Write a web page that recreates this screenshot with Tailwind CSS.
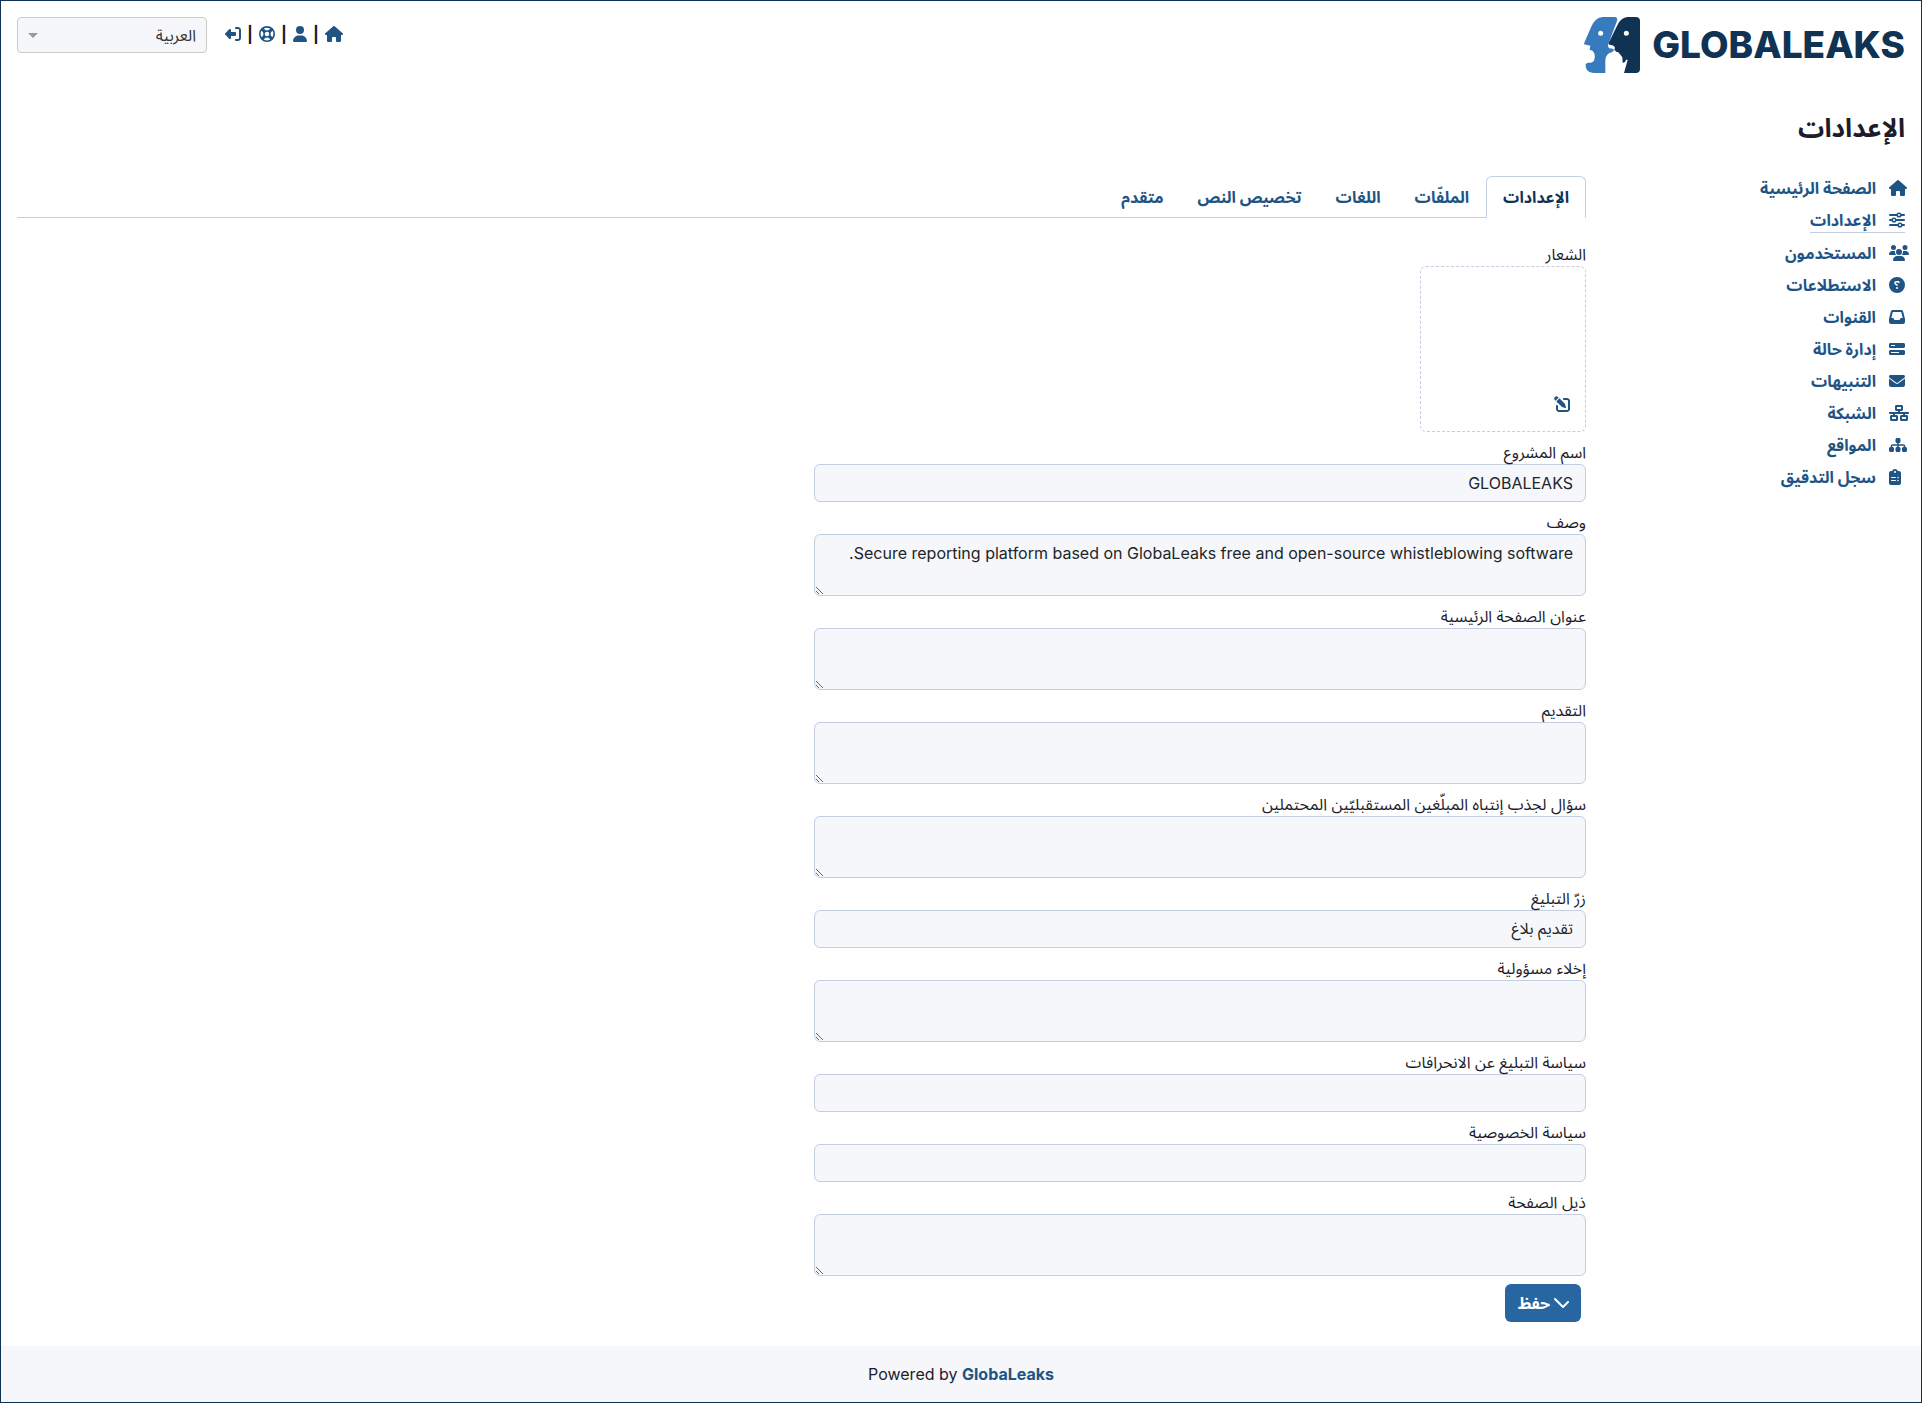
<!DOCTYPE html>
<html lang="ar" dir="rtl">
<head>
<meta charset="utf-8">
<meta name="viewport" content="width=device-width, initial-scale=1">
<title>GLOBALEAKS - الإعدادات</title>
<script src="https://cdn.jsdelivr.net/npm/@tailwindcss/browser@4"></script>
</head>
<body class="flex min-h-screen flex-col border border-[#103253] bg-white font-['Inter','Noto_Sans_Arabic','Noto_Sans',sans-serif] text-base leading-6 text-[#1c1c2b]">

<svg class="hidden" aria-hidden="true">
  <symbol id="house" viewBox="0 0 576 512"><path d="M575.8 255.5c0 18-15 32.1-32 32.1h-32l.7 160.2c0 2.7-.2 5.4-.5 8.1V472c0 22.1-17.9 40-40 40H392c-22.1 0-40-17.900-40-40V384c0-17.700-14.300-32-32-32H256c-17.700 0-32 14.300-32 32v88c0 22.100-17.900 40-40 40H104c-22.100 0-40-17.900-40-40V287.600H32c-18 0-32-14-32-32.100c0-9 3-17 10-24L266.400 8c7-7 15-8 22-8s15 2 21 7L564.800 231.500c8 7 12 15 11 24z"/></symbol>
  <symbol id="user" viewBox="0 0 448 512"><path d="M224 256A128 128 0 1 0 224 0a128 128 0 1 0 0 256zm-45.700 48C79.800 304 0 383.800 0 482.300C0 498.700 13.300 512 29.700 512H418.300c16.400 0 29.700-13.300 29.700-29.700C448 383.800 368.200 304 269.700 304H178.300z"/></symbol>
  <symbol id="ring" viewBox="0 0 512 512"><g fill="none" stroke="currentColor"><circle cx="256" cy="256" r="230" stroke-width="52"/><circle cx="256" cy="256" r="96" stroke-width="48"/><path stroke-width="100" d="M90 90l100 100M422 90L322 190M90 422l100-100M422 422L322 322"/></g></symbol>
  <symbol id="exit" viewBox="0 0 512 512"><path transform="matrix(-1 0 0 1 512 0)" d="M377.900 105.900L500.700 228.700c7.200 7.200 11.300 17.100 11.300 27.300s-4.100 20.100-11.300 27.300L377.900 406.100c-6.400 6.400-15 9.900-24 9.900c-18.700 0-33.900-15.200-33.900-33.900v-62.100H192c-17.700 0-32-14.300-32-32v-64c0-17.700 14.300-32 32-32h128v-62.100c0-18.700 15.200-33.900 33.900-33.900c9 0 17.600 3.600 24 9.900zM160 96H96c-17.700 0-32 14.300-32 32v256c0 17.700 14.300 32 32 32h64c17.700 0 32 14.300 32 32s-14.300 32-32 32H96c-53 0-96-43-96-96V128C0 75 43 32 96 32h64c17.700 0 32 14.300 32 32s-14.300 32-32 32z"/></symbol>
  <symbol id="sliders" viewBox="0 0 512 512"><g fill="none" stroke="currentColor" stroke-width="60" stroke-linecap="round"><path d="M30 96h220M390 96h92M30 256h60M230 256h252M30 416h250M420 416h62"/><circle cx="320" cy="96" r="58" stroke-width="50"/><circle cx="160" cy="256" r="58" stroke-width="50"/><circle cx="350" cy="416" r="58" stroke-width="50"/></g></symbol>
  <symbol id="users" viewBox="0 0 640 512"><path d="M144 0a80 80 0 1 1 0 160A80 80 0 1 1 144 0zM512 0a80 80 0 1 1 0 160A80 80 0 1 1 512 0zM0 298.700C0 239.800 47.800 192 106.700 192h42.700c15.900 0 31 3.500 44.600 9.700c-1.300 7.200-1.900 14.700-1.900 22.300c0 38.200 16.800 72.500 43.300 96H21.300C9.600 320 0 310.400 0 298.700zM404.600 320c26.600-23.500 43.300-57.800 43.300-96c0-7.600-.7-15-1.900-22.300c13.600-6.300 28.700-9.700 44.600-9.700h42.700C592.200 192 640 239.800 640 298.700c0 11.800-9.600 21.300-21.300 21.300H404.600zM224 224a96 96 0 1 1 192 0 96 96 0 1 1 -192 0zM128 485.300C128 411.700 187.700 352 261.300 352H378.700C452.300 352 512 411.700 512 485.300c0 14.700-11.900 26.700-26.700 26.700H154.700c-14.700 0-26.700-11.900-26.700-26.700z"/></symbol>
  <symbol id="question" viewBox="0 0 512 512"><path transform="matrix(-1 0 0 1 512 0)" d="M256 512A256 256 0 1 0 256 0a256 256 0 1 0 0 512zM169.800 165.300c7.900-22.300 29.100-37.300 52.800-37.300h58.300c34.900 0 63.100 28.300 63.100 63.100c0 22.600-12.100 43.500-31.700 54.800L280 264.400c-.2 13-10.900 23.600-24 23.600c-13.300 0-24-10.700-24-24V250.500c0-8.600 4.600-16.500 12.100-20.800l44.300-25.400c4.700-2.700 7.600-7.700 7.600-13.100c0-8.400-6.800-15.100-15.100-15.100H222.600c-3.400 0-6.400 2.100-7.500 5.300l-.4 1.200c-4.400 12.500-18.200 19-30.600 14.600s-19-18.200-14.600-30.600l.3-1.300zM224 352a32 32 0 1 1 64 0 32 32 0 1 1 -64 0z"/></symbol>
  <symbol id="inbox" viewBox="0 0 512 512"><path d="M121 32C91.600 32 66 52 58.900 80.500L1.900 308.400C.6 313.500 0 318.700 0 323.900V416c0 35.300 28.700 64 64 64H448c35.300 0 64-28.700 64-64V323.900c0-5.200-.6-10.400-1.900-15.500l-57-227.900C446 52 420.400 32 391 32H121zm0 64H391l48 192H387.800c-12.100 0-23.200 6.800-28.600 17.700l-14.300 28.600c-5.400 10.800-16.500 17.700-28.600 17.700H195.800c-12.100 0-23.200-6.800-28.600-17.700l-14.300-28.600c-5.400-10.800-16.500-17.700-28.600-17.700H73L121 96z"/></symbol>
  <symbol id="progress" viewBox="0 0 512 512"><path transform="matrix(-1 0 0 1 512 0)" d="M448 160H320V128H448v32zM48 64C21.500 64 0 85.500 0 112v64c0 26.500 21.500 48 48 48H464c26.500 0 48-21.500 48-48V112c0-26.500-21.500-48-48-48H48zM448 352v32H192V352H448zM48 288c-26.500 0-48 21.500-48 48v64c0 26.500 21.500 48 48 48H464c26.500 0 48-21.500 48-48V336c0-26.500-21.500-48-48-48H48z"/></symbol>
  <symbol id="mail" viewBox="0 0 512 512"><path d="M48 64C21.500 64 0 85.500 0 112c0 15.100 7.100 29.300 19.200 38.400L236.800 313.600c11.400 8.500 27 8.500 38.400 0L492.800 150.400c12.100-9.100 19.200-23.300 19.200-38.400c0-26.500-21.500-48-48-48H48zM0 176V384c0 35.300 28.700 64 64 64H448c35.300 0 64-28.700 64-64V176L294.400 339.200c-22.800 17.100-54 17.100-76.800 0L0 176z"/></symbol>
  <symbol id="network" viewBox="0 0 640 512"><path d="M256 64H384v64H256V64zM240 0c-26.500 0-48 21.500-48 48v96c0 26.500 21.500 48 48 48h48v32H32c-17.700 0-32 14.300-32 32s14.300 32 32 32h96v32H80c-26.500 0-48 21.500-48 48v96c0 26.500 21.500 48 48 48H240c26.500 0 48-21.500 48-48V368c0-26.500-21.500-48-48-48H192V288H448v32H400c-26.500 0-48 21.500-48 48v96c0 26.500 21.500 48 48 48H560c26.500 0 48-21.500 48-48V368c0-26.500-21.500-48-48-48H512V288h96c17.700 0 32-14.300 32-32s-14.300-32-32-32H352V192h48c26.500 0 48-21.500 48-48V48c0-26.500-21.500-48-48-48H240zM96 448V384H224v64H96zm320-64H544v64H416V384z"/></symbol>
  <symbol id="sitemap" viewBox="0 0 576 512"><path d="M208 80c0-26.500 21.500-48 48-48h64c26.500 0 48 21.500 48 48v64c0 26.500-21.500 48-48 48h-8v40H464c30.900 0 56 25.100 56 56v32h8c26.500 0 48 21.500 48 48v64c0 26.500-21.500 48-48 48H464c-26.500 0-48-21.500-48-48V368c0-26.500 21.500-48 48-48h8V288c0-4.400-3.600-8-8-8H312v40h8c26.500 0 48 21.500 48 48v64c0 26.500-21.500 48-48 48H256c-26.500 0-48-21.500-48-48V368c0-26.500 21.500-48 48-48h8V280H112c-4.400 0-8 3.600-8 8v32h8c26.500 0 48 21.500 48 48v64c0 26.500-21.500 48-48 48H48c-26.500 0-48-21.500-48-48V368c0-26.500 21.500-48 48-48h8V288c0-30.900 25.100-56 56-56H264V192h-8c-26.500 0-48-21.500-48-48V80z"/></symbol>
  <symbol id="clipboard" viewBox="0 0 384 512"><path transform="matrix(-1 0 0 1 384 0)" fill-rule="evenodd" d="M192 0c-41.800 0-77.400 26.700-90.500 64H64C28.700 64 0 92.700 0 128V448c0 35.300 28.700 64 64 64H320c35.300 0 64-28.700 64-64V128c0-35.300-28.700-64-64-64H282.500C269.400 26.700 233.800 0 192 0zm0 64a32 32 0 1 1 0 64 32 32 0 1 1 0-64zM72 272a24 24 0 1 1 48 0 24 24 0 1 1 -48 0zm104-16H304c8.800 0 16 7.200 16 16s-7.200 16-16 16H176c-8.800 0-16-7.200-16-16s7.200-16 16-16zM72 368a24 24 0 1 1 48 0 24 24 0 1 1 -48 0zm88 0c0-8.800 7.200-16 16-16H304c8.800 0 16 7.200 16 16s-7.200 16-16 16H176c-8.800 0-16-7.200-16-16z"/></symbol>
  <symbol id="edit" viewBox="0 0 512 512"><path transform="matrix(-1 0 0 1 512 0)" d="M471.600 21.700c-21.900-21.900-57.300-21.900-79.200 0L362.300 51.700l97.900 97.900 30.100-30.100c21.900-21.900 21.900-57.300 0-79.200L471.600 21.700zm-299.200 220c-6.100 6.100-10.800 13.600-13.500 21.900l-29.600 88.800c-2.900 8.600-.6 18.100 5.800 24.600s15.900 8.700 24.600 5.800l88.800-29.600c8.200-2.700 15.700-7.400 21.900-13.500L437.700 172.300 339.700 74.300 172.400 241.700zM96 64C43 64 0 107 0 160V416c0 53 43 96 96 96H352c53 0 96-43 96-96V320c0-17.700-14.300-32-32-32s-32 14.300-32 32v96c0 17.700-14.300 32-32 32H96c-17.700 0-32-14.300-32-32V160c0-17.700 14.300-32 32-32h96c17.700 0 32-14.300 32-32s-14.300-32-32-32H96z"/></symbol>
</svg>

<header class="flex items-start justify-between p-4">
  <a href="#" dir="ltr" class="flex h-14 items-center gap-3 text-[#103253]">
    <svg class="size-14" viewBox="45 51 168 168" aria-hidden="true">
      <path fill="#377abd" d="M102 51H138Q147 53 144 63L120 127Q114 136 120 145L132 146L135 151L129 157Q111 160 109 180V219H76C57 218 49 209 50 193C56 185 65 192 74 184C80 174 79 154 66 151L62 149L64 137L45 133L46 128L66 82Q78 52 102 51z"/>
      <path fill="#103253" d="M174 51H202Q213 53 213 63V207Q213 218 203 219H165L176 180Q172 176 168 186L161 189L160 172Q151 160 148 157L142 155L136 149L138 143L134 137L118 133L120 127L142 82Q154 53 174 51z"/>
      <circle cx="95" cy="100" r="7.500" fill="#fff"/><circle cx="172" cy="100" r="7.500" fill="#fff"/>
    </svg>
    <span class="text-[37px] leading-[54px] font-extrabold">GLOBALEAKS</span>
  </a>
  <div class="flex items-start gap-[18px]">
    <nav aria-label="الحساب" class="flex h-[34px] items-center gap-[6px] text-[#1c1c2b]">
      <a href="#" aria-label="الصفحة الرئيسية" class="text-[#205485]"><svg class="h-4 w-[18px] fill-current"><use href="#house"/></svg></a>
      <span class="font-bold">|</span>
      <a href="#" aria-label="التفضيلات" class="text-[#205485]"><svg class="h-4 w-[14px] fill-current"><use href="#user"/></svg></a>
      <span class="font-bold">|</span>
      <a href="#" aria-label="المساعدة" class="text-[#205485]"><svg class="size-4 fill-current"><use href="#ring"/></svg></a>
      <span class="font-bold">|</span>
      <a href="#" aria-label="تسجيل الخروج" class="text-[#205485]"><svg class="size-4 fill-current"><use href="#exit"/></svg></a>
    </nav>
    <div class="relative w-[190px]">
      <select aria-label="اللغة" class="block h-9 w-full appearance-none rounded border border-[#ccc] bg-[#f5f7fb] pr-[10px] pl-9 text-[#333]"><option>العربية</option></select>
      <svg class="pointer-events-none absolute top-4 left-[11px] h-[5px] w-[10px]" viewBox="0 0 10 5" aria-hidden="true"><path fill="#999" d="M0 0h10L5 5z"/></svg>
    </div>
  </div>
</header>

<h1 class="px-4 pt-[21px] pb-[26px] text-[26px] leading-9 font-bold">الإعدادات</h1>

<div class="flex grow">
  <nav aria-label="الإدارة" class="w-[319px] shrink-0 px-4 font-bold text-[#205485]">
    <ul class="flex flex-col">
      <li class="flex py-1"><a href="#" class="flex h-6 items-center gap-[13px]"><span class="flex w-4 justify-end"><svg class="h-4 w-[18px] shrink-0 fill-current"><use href="#house"/></svg></span>الصفحة الرئيسية</a></li>
      <li class="flex py-1"><a href="#" aria-current="page" class="flex h-[25px] items-center gap-[13px] border-b border-[#c3cee0]"><span class="flex w-4 justify-end"><svg class="size-4 shrink-0 fill-current"><use href="#sliders"/></svg></span>الإعدادات</a></li>
      <li class="flex py-1"><a href="#" class="flex h-6 items-center gap-[13px]"><span class="flex w-4 justify-end"><svg class="h-4 w-5 shrink-0 fill-current"><use href="#users"/></svg></span>المستخدمون</a></li>
      <li class="flex py-1"><a href="#" class="flex h-6 items-center gap-[13px]"><span class="flex w-4 justify-end"><svg class="size-4 shrink-0 fill-current"><use href="#question"/></svg></span>الاستطلاعات</a></li>
      <li class="flex py-1"><a href="#" class="flex h-6 items-center gap-[13px]"><span class="flex w-4 justify-end"><svg class="size-4 shrink-0 fill-current"><use href="#inbox"/></svg></span>القنوات</a></li>
      <li class="flex py-1"><a href="#" class="flex h-6 items-center gap-[13px]"><span class="flex w-4 justify-end"><svg class="size-4 shrink-0 fill-current"><use href="#progress"/></svg></span>إدارة حالة</a></li>
      <li class="flex py-1"><a href="#" class="flex h-6 items-center gap-[13px]"><span class="flex w-4 justify-end"><svg class="size-4 shrink-0 fill-current"><use href="#mail"/></svg></span>التنبيهات</a></li>
      <li class="flex py-1"><a href="#" class="flex h-6 items-center gap-[13px]"><span class="flex w-4 justify-end"><svg class="h-4 w-5 shrink-0 fill-current"><use href="#network"/></svg></span>الشبكة</a></li>
      <li class="flex py-1"><a href="#" class="flex h-6 items-center gap-[13px]"><span class="flex w-4 justify-end"><svg class="h-4 w-[18px] shrink-0 fill-current"><use href="#sitemap"/></svg></span>المواقع</a></li>
      <li class="flex py-1"><a href="#" class="flex h-6 items-center gap-[13px]"><span class="flex w-4 justify-end"><svg class="h-4 w-3 shrink-0 fill-current"><use href="#clipboard"/></svg></span>سجل التدقيق</a></li>
    </ul>
  </nav>

  <main class="grow px-4 pt-1 pb-6">
    <div class="flex border-b border-[#c3cee0] font-bold text-[#205485]">
      <a href="#" aria-current="page" class="-mb-px rounded-t-md border border-[#c3cee0] border-b-white bg-white px-4 py-2 text-[#103253]">الإعدادات</a>
      <a href="#" class="border border-transparent border-b-0 px-4 py-2">الملفّات</a>
      <a href="#" class="border border-transparent border-b-0 px-4 py-2">اللغات</a>
      <a href="#" class="border border-transparent border-b-0 px-4 py-2">تخصيص النص</a>
      <a href="#" class="border border-transparent border-b-0 px-4 py-2">متقدم</a>
    </div>
    <div class="grid grid-cols-2 gap-6 pt-6">
      <form class="flex flex-col gap-2">
        <div>
          <div>الشعار</div>
          <div class="flex size-[166px] items-end rounded-md border border-dashed border-[#c3cee0] px-[15px] pb-[19px]">
            <button type="button" aria-label="تعديل الشعار" class="text-[#205485]"><svg class="size-4 fill-current"><use href="#edit"/></svg></button>
          </div>
        </div>
        <div><label for="name" class="block">اسم المشروع</label><input id="name" value="GLOBALEAKS" class="block h-[38px] w-full rounded-md border border-[#c3cee0] bg-[#f5f7fb] px-3 text-[#212529]"></div>
        <div><label for="desc" class="block">وصف</label><textarea id="desc" rows="2" class="block h-[62px] w-full resize-y rounded-md border border-[#c3cee0] bg-[#f5f7fb] px-3 py-[6px] text-[#212529]">Secure reporting platform based on GlobaLeaks free and open-source whistleblowing software.</textarea></div>
        <div><label for="title" class="block">عنوان الصفحة الرئيسية</label><textarea id="title" rows="2" class="block h-[62px] w-full resize-y rounded-md border border-[#c3cee0] bg-[#f5f7fb] px-3 py-[6px] text-[#212529]"></textarea></div>
        <div><label for="intro" class="block">التقديم</label><textarea id="intro" rows="2" class="block h-[62px] w-full resize-y rounded-md border border-[#c3cee0] bg-[#f5f7fb] px-3 py-[6px] text-[#212529]"></textarea></div>
        <div><label for="ask" class="block">سؤال لجذب إنتباه المبلّغين المستقبليّين المحتملين</label><textarea id="ask" rows="2" class="block h-[62px] w-full resize-y rounded-md border border-[#c3cee0] bg-[#f5f7fb] px-3 py-[6px] text-[#212529]"></textarea></div>
        <div><label for="button" class="block">زرّ التبليغ</label><input id="button" value="تقديم بلاغ" class="block h-[38px] w-full rounded-md border border-[#c3cee0] bg-[#f5f7fb] px-3 text-[#212529]"></div>
        <div><label for="disclaimer" class="block">إخلاء مسؤولية</label><textarea id="disclaimer" rows="2" class="block h-[62px] w-full resize-y rounded-md border border-[#c3cee0] bg-[#f5f7fb] px-3 py-[6px] text-[#212529]"></textarea></div>
        <div><label for="policy" class="block">سياسة التبليغ عن الانحرافات</label><input id="policy" class="block h-[38px] w-full rounded-md border border-[#c3cee0] bg-[#f5f7fb] px-3 text-[#212529]"></div>
        <div><label for="privacy" class="block">سياسة الخصوصية</label><input id="privacy" class="block h-[38px] w-full rounded-md border border-[#c3cee0] bg-[#f5f7fb] px-3 text-[#212529]"></div>
        <div><label for="footer" class="block">ذيل الصفحة</label><textarea id="footer" rows="2" class="block h-[62px] w-full resize-y rounded-md border border-[#c3cee0] bg-[#f5f7fb] px-3 py-[6px] text-[#212529]"></textarea></div>
        <button type="button" class="mr-[5px] flex h-[38px] items-center gap-[3px] self-start rounded-md bg-[#2866a2] pr-3 pl-[13px] font-bold text-white">
          <svg class="h-4 w-4" viewBox="0 0 16 16" fill="none" stroke="currentColor" stroke-width="2" stroke-linecap="round" stroke-linejoin="round" aria-hidden="true"><path d="M2 4l8 8 5-5"/></svg>حفظ</button>
      </form>
    </div>
  </main>
</div>

<footer dir="ltr" class="bg-[#f5f7fb] p-4 text-center">Powered by <a href="#" class="font-bold text-[#205485]">GlobaLeaks</a></footer>
</body>
</html>
